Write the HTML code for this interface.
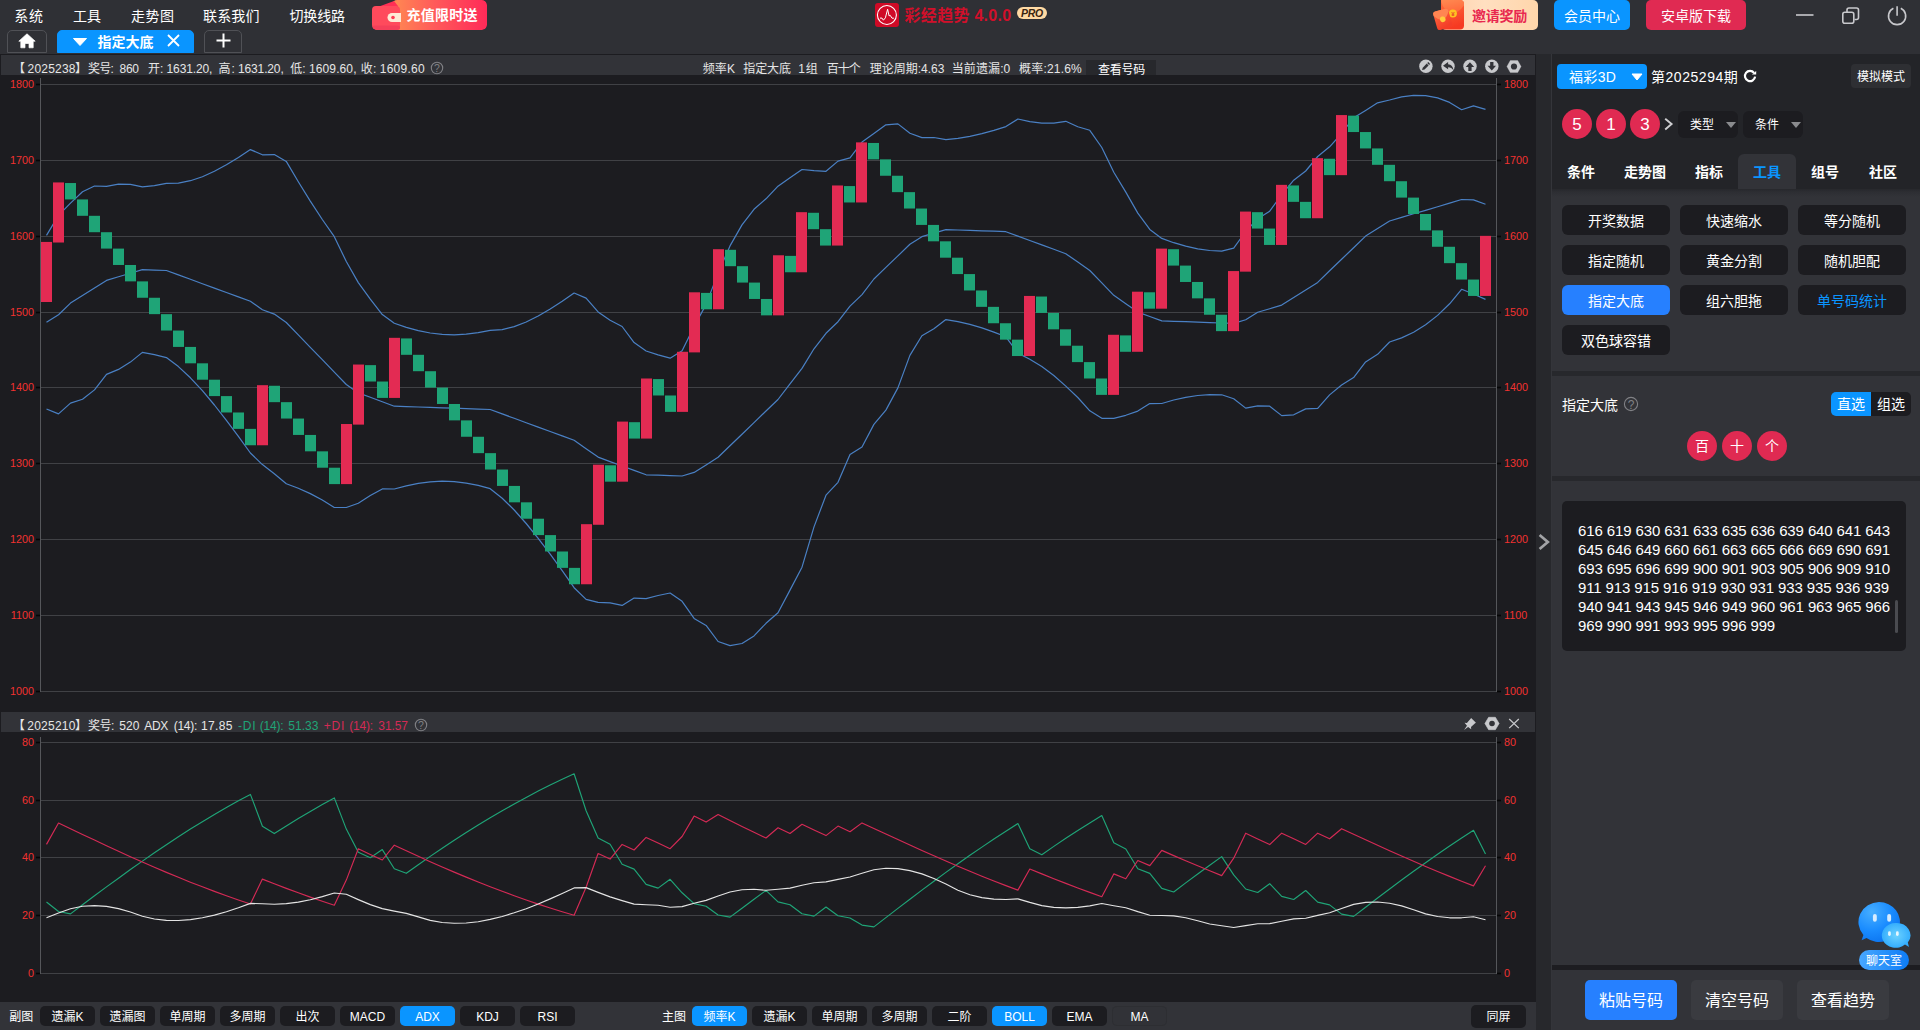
<!DOCTYPE html>
<html lang="zh-CN">
<head>
<meta charset="utf-8">
<title>彩经趋势 4.0.0</title>
<style>
*{box-sizing:border-box;margin:0;padding:0}
html,body{width:1920px;height:1030px;overflow:hidden;background:#1c1c20}
body{position:relative;font-family:"Liberation Sans","Noto Sans CJK SC",sans-serif;color:#fff;font-size:12px;line-height:1}
.abs{position:absolute}
.t{position:absolute;white-space:nowrap;line-height:1}
#topbar{position:absolute;left:0;top:0;width:1920px;height:54px;background:#2f3035}
.menu{position:absolute;top:8px;font-size:14px;line-height:16px;color:#fff;white-space:nowrap}
.tab{position:absolute;top:30px;height:23px;border:1px solid #505156;border-radius:5px 5px 0 0;background:#2f3035}
.hdr{position:absolute;background:#323338}
.hdr .t{top:0;height:20px;line-height:20px;font-size:12px;color:#e6e6e6}
.ax{position:absolute;font-size:10.8px;line-height:12px;color:#f23230;white-space:nowrap}
.axl{width:34px;text-align:right;left:0}
.axr{left:1504px}
.tb{position:absolute;top:1006px;height:20px;width:55px;border-radius:5px;background:#1c1c20;color:#fff;font-size:12px;line-height:22.6px;text-align:center;white-space:nowrap}
.tb.on{background:#0a95ff}
.lab{position:absolute;top:1006px;height:20px;line-height:20px;font-size:12px;color:#fff;white-space:nowrap}
#panel{position:absolute;left:1552px;top:54px;width:368px;height:976px;background:#323338}
.btn{position:absolute;width:108px;height:30px;border-radius:6px;background:#1c1c20;color:#fff;font-size:14px;line-height:32.4px;text-align:center;white-space:nowrap}
.ball{position:absolute;width:30px;height:30px;border-radius:50%;background:#e02a52;color:#fff;text-align:center;line-height:30px}
.ptab{position:absolute;top:100px;height:35px;line-height:36px;font-size:14px;font-weight:bold;color:#fff;text-align:center;white-space:nowrap}
.dd{position:absolute;top:57px;height:27px;width:60px;border-radius:6px;background:#1c1c20;font-size:12px;line-height:29px;color:#fff;padding-left:12px}
.bb{position:absolute;top:926px;height:40px;width:92px;border-radius:5px;background:#3a3b40;color:#fff;font-size:16px;line-height:42px;text-align:center;white-space:nowrap}
</style>
</head>
<body>
<div id="topbar">
  <div class="t" style="left:14.3px;top:6.0px;height:20px;line-height:20px;font-size:14px;color:#fff;letter-spacing:0.70px">系统</div><div class="t" style="left:73.0px;top:6.0px;height:20px;line-height:20px;font-size:14px;color:#fff">工具</div><div class="t" style="left:131.0px;top:6.0px;height:20px;line-height:20px;font-size:14px;color:#fff;letter-spacing:0.50px">走势图</div><div class="t" style="left:203.0px;top:6.0px;height:20px;line-height:20px;font-size:14px;color:#fff;letter-spacing:0.17px">联系我们</div><div class="t" style="left:289.5px;top:6.0px;height:20px;line-height:20px;font-size:14px;color:#fff;letter-spacing:-0.17px">切换线路</div>

  <!-- recharge promo -->
  <div class="abs" style="left:372px;top:0;width:115px;height:30px;border-radius:5px;overflow:hidden">
    <div class="abs" style="left:20px;top:0;width:95px;height:30px;border-radius:5px;background:linear-gradient(90deg,#ff8a52 0%,#ff5a5a 45%,#ff2a58 100%)"></div>
    <svg class="abs" style="left:0;top:0" width="32" height="30" viewBox="0 0 32 30">
      <path d="M3 8 L22 1 L26 6 L26 9 Z" fill="#ff2f55"/>
      <rect x="0" y="6" width="28" height="24" rx="4" fill="#ff4a5c"/>
      <rect x="0" y="25.5" width="28" height="4.5" rx="3" fill="#f5405a"/>
      <path d="M20 13 h9 v9 h-9 a4.5 4.5 0 0 1 0 -9z" fill="#ffe9d6"/>
      <circle cx="21" cy="17.5" r="1.8" fill="#ff3b55"/>
    </svg>
    <div class="t" style="left:34.5px;top:5.0px;height:20px;line-height:20px;font-size:14px;color:#fff;font-weight:bold;letter-spacing:0.25px">充值限时送</div>
  </div>

  <!-- tabs -->
  <div class="tab" style="left:7px;width:40px">
    <svg class="abs" style="left:10px;top:2px" width="18" height="16" viewBox="0 0 18 16"><path d="M9 0.8 L0.8 8.2 H2.8 V14.8 H7 V10.5 H11 V14.8 H15.2 V8.2 H17.2 Z" fill="#fff" stroke="#fff" stroke-width="0.7" stroke-linejoin="round"/></svg>
  </div>
  <div class="tab" style="left:57px;width:137px;background:#0a95ff;border-color:#0a95ff">
    <svg class="abs" style="left:15px;top:7px" width="14" height="8" viewBox="0 0 14 8"><path d="M0.5 0.5 H13.5 L7 7.5 Z" fill="#fff" stroke="#fff" stroke-linejoin="round" stroke-width="1"/></svg>
    <div class="t" style="left:39.5px;top:0.8px;height:20px;line-height:20px;font-size:14px;color:#fff;font-weight:bold">指定大底</div>
    <svg class="abs" style="left:109px;top:3px" width="13" height="13" viewBox="0 0 13 13"><path d="M1 1 L12 12 M12 1 L1 12" stroke="#fff" stroke-width="1.8" fill="none"/></svg>
  </div>
  <div class="tab" style="left:204px;width:38px">
    <svg class="abs" style="left:11px;top:2px" width="15" height="15" viewBox="0 0 15 15"><path d="M7.5 0.5 V14.5 M0.5 7.5 H14.5" stroke="#fff" stroke-width="2" fill="none"/></svg>
  </div>

  <!-- logo + title -->
  <svg class="abs" style="left:875px;top:3px" width="24" height="24" viewBox="0 0 24 24">
    <rect x="0" y="0" width="24" height="24" rx="3" fill="#cf0a26"/>
    <circle cx="11.9" cy="12" r="9.5" fill="none" stroke="#fff" stroke-width="1.1"/>
    <path d="M5 15.1 H7 L8.4 17.2 L10.4 14.8 L12.6 6.2 L14.1 12.9 L15.2 12.3 L17 15.2 H18.9" fill="none" stroke="#fff" stroke-width="1" stroke-linejoin="round"/>
  </svg>
  <div class="t" style="left:904.6px;top:5.5px;height:20px;line-height:20px;font-size:16px;color:#d10f2a;font-weight:bold;letter-spacing:0.27px">彩经趋势 4.0.0</div>
  <div class="abs" style="left:1017px;top:7px;width:30px;height:12px;border-radius:6px;background:#ffd9a3;color:#3a2410;font-size:10.5px;line-height:12px;font-weight:bold;font-style:italic;text-align:center;letter-spacing:-0.2px">PRO</div>

  <!-- invite -->
  <div class="abs" style="left:1441px;top:0;width:97px;height:30px;border-radius:5px;background:linear-gradient(90deg,#ffd2ae 0%,#ffdfc0 45%,#ffd6ab 100%)"></div>
  <svg class="abs" style="left:1430px;top:0" width="40" height="31" viewBox="1430 0 40 31">
    <defs>
      <linearGradient id="ev1" x1="0" y1="0" x2="0.3" y2="1"><stop offset="0" stop-color="#ff6f3e"/><stop offset="1" stop-color="#f63a22"/></linearGradient>
      <linearGradient id="ev2" x1="0" y1="0" x2="0.4" y2="1"><stop offset="0" stop-color="#ff8a52"/><stop offset="1" stop-color="#ff6a3c"/></linearGradient>
      <linearGradient id="ev3" x1="0" y1="0" x2="0.3" y2="1"><stop offset="0" stop-color="#ff6a40"/><stop offset="1" stop-color="#f43e28"/></linearGradient>
    </defs>
    <path d="M1441 0 H1460 a4 4 0 0 1 4 4 V25.5 a4 4 0 0 1 -4 4 H1445 a4 4 0 0 1 -4 -4 Z" fill="url(#ev1)"/>
    <path d="M1441.3 0 H1460 a4 4 0 0 1 4 4 V5.5 Q1458 13.5 1452.5 13.2 Q1444 12 1441.3 2 Z" fill="url(#ev2)"/>
    <circle cx="1452.9" cy="13.4" r="4" fill="#ffc321"/>
    <text x="1452.9" y="15.6" font-size="6" font-weight="bold" text-anchor="middle" fill="#e8452a" font-family="Liberation Sans,sans-serif">¥</text>
    <g transform="translate(0.7 -0.9) rotate(-16 1442 20)">
      <rect x="1434.2" y="10.6" width="15.6" height="19.2" rx="2.6" fill="url(#ev3)"/>
      <path d="M1434.2 13.2 a2.6 2.6 0 0 1 2.6 -2.6 H1447.2 a2.6 2.6 0 0 1 2.6 2.6 V14 Q1446 20.5 1442 20.3 Q1438 20.3 1434.2 14.5 Z" fill="#ff8552"/>
      <circle cx="1442" cy="20.2" r="2.8" fill="#ffcc3e"/>
    </g>
  </svg>
  <div class="t" style="left:1472.0px;top:6.0px;height:20px;line-height:20px;font-size:14px;color:#e8284f;font-weight:bold;letter-spacing:-0.23px">邀请奖励</div>
  <div class="abs" style="left:1554px;top:0;width:76px;height:30px;border-radius:5px;background:#0a95ff;color:#fff;font-size:14px;line-height:32px;text-align:center">会员中心</div>
  <div class="abs" style="left:1646px;top:0;width:100px;height:30px;border-radius:5px;background:#e02a52;color:#fff;font-size:14px;line-height:32px;text-align:center">安卓版下载</div>

  <!-- window controls -->
  <svg class="abs" style="left:1790px;top:0" width="130" height="32" viewBox="0 0 130 32" fill="none" stroke="#c8c8cc" stroke-width="1.6">
    <path d="M6 15 H23.5"/>
    <rect x="52.8" y="12.3" width="11" height="11" rx="2"/>
    <path d="M57 12 V10 a2 2 0 0 1 2 -2 H66.5 a2 2 0 0 1 2 2 V17.5 a2 2 0 0 1 -2 2 H64.5"/>
    <path d="M107.1 6.2 V15.7"/>
    <path d="M103.4 8.3 A8.6 8.6 0 1 0 110.8 8.3"/>
  </svg>
</div>

<!-- main chart header -->
<div class="hdr" style="left:1px;top:55px;width:1534px;height:20px">
  <div class="t" style="left:12.0px;top:3.5px;height:20px;line-height:20px;font-size:12px;color:#e6e6e6">【</div><div class="t" style="left:26.5px;top:3.5px;height:20px;line-height:20px;font-size:12px;color:#e6e6e6;letter-spacing:0.22px">2025238</div><div class="t" style="left:74.0px;top:3.5px;height:20px;line-height:20px;font-size:12px;color:#e6e6e6">】</div><div class="t" style="left:87.0px;top:3.5px;height:20px;line-height:20px;font-size:12px;color:#e6e6e6;letter-spacing:-0.75px">奖号:</div><div class="t" style="left:118.5px;top:3.5px;height:20px;line-height:20px;font-size:12px;color:#e6e6e6;letter-spacing:-0.25px">860</div><div class="t" style="left:147.0px;top:3.5px;height:20px;line-height:20px;font-size:12px;color:#e6e6e6">开:</div><div class="t" style="left:165.5px;top:3.5px;height:20px;line-height:20px;font-size:12px;color:#e6e6e6;letter-spacing:-0.11px">1631.20,</div><div class="t" style="left:217.5px;top:3.5px;height:20px;line-height:20px;font-size:12px;color:#e6e6e6;letter-spacing:1.00px">高:</div><div class="t" style="left:237.0px;top:3.5px;height:20px;line-height:20px;font-size:12px;color:#e6e6e6;letter-spacing:-0.14px">1631.20,</div><div class="t" style="left:289.3px;top:3.5px;height:20px;line-height:20px;font-size:12px;color:#e6e6e6">低:</div><div class="t" style="left:308.0px;top:3.5px;height:20px;line-height:20px;font-size:12px;color:#e6e6e6;letter-spacing:0.11px">1609.60,</div><div class="t" style="left:359.7px;top:3.5px;height:20px;line-height:20px;font-size:12px;color:#e6e6e6;letter-spacing:0.30px">收:</div><div class="t" style="left:378.8px;top:3.5px;height:20px;line-height:20px;font-size:12px;color:#e6e6e6;letter-spacing:0.23px">1609.60</div>
  <svg class="abs" style="left:429px;top:6px" width="14" height="14" viewBox="0 0 14 14"><circle cx="7" cy="7" r="5.7" fill="none" stroke="#808185" stroke-width="1.1"/><text x="7" y="10.9" font-size="10.5" text-anchor="middle" fill="#808185" font-family="Liberation Sans,sans-serif">?</text></svg>
  <div class="t" style="left:701.7px;top:3.5px;height:20px;line-height:20px;font-size:12px;color:#e6e6e6;letter-spacing:0.15px">频率K</div><div class="t" style="left:742.3px;top:3.5px;height:20px;line-height:20px;font-size:12px;color:#e6e6e6;letter-spacing:-0.10px">指定大底</div><div class="t" style="left:797.3px;top:3.5px;height:20px;line-height:20px;font-size:12px;color:#e6e6e6;letter-spacing:0.70px">1组</div><div class="t" style="left:825.7px;top:3.5px;height:20px;line-height:20px;font-size:12px;color:#e6e6e6;letter-spacing:-1.00px">百十个</div><div class="t" style="left:868.7px;top:3.5px;height:20px;line-height:20px;font-size:12px;color:#e6e6e6">理论周期:4.63</div><div class="t" style="left:950.7px;top:3.5px;height:20px;line-height:20px;font-size:12px;color:#e6e6e6;letter-spacing:0.12px">当前遗漏:0</div><div class="t" style="left:1018.0px;top:3.5px;height:20px;line-height:20px;font-size:12px;color:#e6e6e6;letter-spacing:0.19px">概率:21.6%</div>
  <div class="abs" style="left:1085px;top:5px;width:70px;height:15px;background:#27282c"></div>
  <div class="t" style="left:1097.0px;top:4.5px;height:20px;line-height:20px;font-size:12px;color:#fff;letter-spacing:-0.23px">查看号码</div>
  <svg class="abs" style="left:1416px;top:3px" width="112" height="18" viewBox="1417 58 112 18">
    <g fill="#c8c9cc">
      <circle cx="1425.9" cy="66.3" r="6.7"/><circle cx="1448" cy="66.3" r="6.7"/><circle cx="1470" cy="66.3" r="6.7"/><circle cx="1491.8" cy="66.3" r="6.7"/>
      <path d="M1506.9 66.5 L1510.3 60.5 H1517.7 L1521.1 66.5 L1517.7 72.5 H1510.3 Z" stroke="#c8c9cc" stroke-width="0.3" stroke-linejoin="round"/>
    </g>
    <g fill="#323338">
      <g transform="translate(1425.9 66.3) rotate(-45)"><path d="M-5.4 0 L-3.2 -1.3 H2.5 V1.3 H-3.2 Z"/><rect x="3.2" y="-1.3" width="1.5" height="2.6"/></g>
      <path d="M1443 65.7 L1448.1 62 V64.2 Q1453 64.6 1453.5 70.4 Q1451.5 67.2 1448.1 67.2 V69.3 Z"/>
      <path d="M1469.95 62.3 L1474.2 67.1 H1471.6 V71 H1468.3 V67.1 H1465.7 Z"/>
      <path d="M1491.8 70.6 L1496.05 65.8 H1493.45 V62.1 H1490.15 V65.8 H1487.55 Z"/>
      <circle cx="1514" cy="66.5" r="3.1"/>
    </g>
  </svg>
</div>

<!-- main chart -->
<svg class="abs" style="left:0;top:75px" width="1536" height="637" viewBox="0 75 1536 637">
  <g stroke="#404145" stroke-width="1" shape-rendering="crispEdges">
    <line x1="41" y1="84.5" x2="1496" y2="84.5"/>
    <line x1="41" y1="160.5" x2="1496" y2="160.5"/>
    <line x1="41" y1="236.5" x2="1496" y2="236.5"/>
    <line x1="41" y1="312.5" x2="1496" y2="312.5"/>
    <line x1="41" y1="387.5" x2="1496" y2="387.5"/>
    <line x1="41" y1="463.5" x2="1496" y2="463.5"/>
    <line x1="41" y1="539.5" x2="1496" y2="539.5"/>
    <line x1="41" y1="615.5" x2="1496" y2="615.5"/>
    <line x1="41" y1="691.5" x2="1496" y2="691.5"/>
  </g>
  <g stroke="#55565a" stroke-width="1" shape-rendering="crispEdges">
    <line x1="40.5" y1="78" x2="40.5" y2="691.5"/><line x1="1496.5" y1="78" x2="1496.5" y2="691.5"/>
  </g>
  <g fill="#050506"><rect x="36" y="83.7" width="4" height="1.6"/><rect x="1497" y="83.7" width="4" height="1.6"/><rect x="36" y="159.7" width="4" height="1.6"/><rect x="1497" y="159.7" width="4" height="1.6"/><rect x="36" y="235.7" width="4" height="1.6"/><rect x="1497" y="235.7" width="4" height="1.6"/><rect x="36" y="311.7" width="4" height="1.6"/><rect x="1497" y="311.7" width="4" height="1.6"/><rect x="36" y="386.7" width="4" height="1.6"/><rect x="1497" y="386.7" width="4" height="1.6"/><rect x="36" y="462.7" width="4" height="1.6"/><rect x="1497" y="462.7" width="4" height="1.6"/><rect x="36" y="538.7" width="4" height="1.6"/><rect x="1497" y="538.7" width="4" height="1.6"/><rect x="36" y="614.7" width="4" height="1.6"/><rect x="1497" y="614.7" width="4" height="1.6"/><rect x="36" y="690.7" width="4" height="1.6"/><rect x="1497" y="690.7" width="4" height="1.6"/></g>
<polyline points="46.5,235.4 58.5,215.4 70.5,203.1 82.5,191.7 94.5,186.0 106.5,186.3 118.5,184.2 130.4,184.3 142.4,186.9 154.4,185.6 166.4,183.4 178.4,183.1 190.4,180.7 202.4,176.7 214.4,171.2 226.4,164.8 238.4,157.5 250.4,149.6 262.4,154.8 274.3,154.6 286.3,161.4 298.3,181.7 310.3,201.1 322.3,219.5 334.3,236.7 346.3,261.5 358.3,282.6 370.3,299.1 382.3,314.6 394.3,323.3 406.3,327.4 418.3,330.6 430.2,333.0 442.2,334.4 454.2,334.8 466.2,334.2 478.2,332.7 490.2,330.3 502.2,329.6 514.2,326.6 526.2,322.0 538.2,316.0 550.2,309.0 562.2,301.3 574.1,293.0 586.1,298.1 598.1,311.9 610.1,320.3 622.1,326.5 634.1,342.6 646.1,351.0 658.1,354.9 670.1,358.2 682.1,350.7 694.1,326.5 706.1,304.4 718.1,273.1 730.0,245.9 742.0,224.9 754.0,209.3 766.0,198.8 778.0,186.2 790.0,177.8 802.0,169.5 814.0,170.7 826.0,171.3 838.0,161.1 850.0,157.9 862.0,142.1 873.9,133.6 885.9,124.8 897.9,123.9 909.9,133.2 921.9,137.6 933.9,137.5 945.9,139.6 957.9,138.4 969.9,136.4 981.9,133.7 993.9,130.4 1005.9,126.6 1017.9,119.0 1029.8,121.7 1041.8,123.2 1053.8,123.1 1065.8,121.3 1077.8,126.7 1089.8,130.3 1101.8,147.5 1113.8,172.3 1125.8,192.1 1137.8,213.1 1149.8,229.4 1161.8,238.4 1173.7,242.7 1185.7,246.2 1197.7,248.8 1209.7,250.5 1221.7,251.2 1233.7,248.1 1245.7,231.5 1257.7,218.7 1269.7,211.2 1281.7,194.6 1293.7,180.2 1305.7,171.0 1317.7,156.5 1329.6,146.8 1341.6,133.5 1353.6,117.7 1365.6,110.4 1377.6,102.8 1389.6,100.0 1401.6,96.9 1413.6,95.4 1425.6,95.7 1437.6,97.9 1449.6,102.4 1461.6,109.7 1473.5,105.9 1485.5,109.3" fill="none" stroke="#4a80c4" stroke-width="1.2" stroke-linejoin="round"/>
<polyline points="46.5,322.2 58.5,314.7 70.5,303.1 82.5,295.5 94.5,287.9 106.5,280.4 118.5,276.8 130.4,273.2 142.4,269.6 154.4,270.1 166.4,270.5 178.4,274.9 190.4,279.3 202.4,283.7 214.4,288.1 226.4,292.5 238.4,296.9 250.4,301.3 262.4,309.7 274.3,314.1 286.3,322.5 298.3,334.9 310.3,347.3 322.3,359.7 334.3,372.1 346.3,384.5 358.3,392.9 370.3,397.3 382.3,401.7 394.3,406.2 406.3,406.6 418.3,407.0 430.2,407.4 442.2,407.8 454.2,408.2 466.2,408.6 478.2,409.1 490.2,409.5 502.2,413.9 514.2,418.3 526.2,422.7 538.2,427.1 550.2,431.5 562.2,435.9 574.1,440.3 586.1,448.7 598.1,457.1 610.1,461.6 622.1,466.0 634.1,470.4 646.1,474.8 658.1,475.2 670.1,475.6 682.1,476.0 694.1,472.4 706.1,464.9 718.1,457.3 730.0,445.7 742.0,434.2 754.0,422.6 766.0,411.0 778.0,399.5 790.0,383.9 802.0,368.4 814.0,348.8 826.0,333.3 838.0,321.7 850.0,306.1 862.0,294.6 873.9,279.0 885.9,267.4 897.9,255.9 909.9,244.3 921.9,236.7 933.9,233.2 945.9,229.6 957.9,230.0 969.9,230.4 981.9,230.8 993.9,231.2 1005.9,231.7 1017.9,236.1 1029.8,240.5 1041.8,244.9 1053.8,249.3 1065.8,253.7 1077.8,262.1 1089.8,270.5 1101.8,282.9 1113.8,295.3 1125.8,303.7 1137.8,312.1 1149.8,316.5 1161.8,320.9 1173.7,321.3 1185.7,321.7 1197.7,322.2 1209.7,322.6 1221.7,323.0 1233.7,323.4 1245.7,319.8 1257.7,312.3 1269.7,308.7 1281.7,305.1 1293.7,297.5 1305.7,290.0 1317.7,282.4 1329.6,270.8 1341.6,259.3 1353.6,247.7 1365.6,236.1 1377.6,228.6 1389.6,221.0 1401.6,217.4 1413.6,213.8 1425.6,210.3 1437.6,206.7 1449.6,203.1 1461.6,199.5 1473.5,199.9 1485.5,204.3" fill="none" stroke="#4a80c4" stroke-width="1.2" stroke-linejoin="round"/>
<polyline points="46.5,409.0 58.5,413.9 70.5,403.1 82.5,399.3 94.5,389.9 106.5,374.4 118.5,369.4 130.4,362.1 142.4,352.4 154.4,354.6 166.4,357.6 178.4,366.6 190.4,377.8 202.4,390.7 214.4,405.0 226.4,420.3 238.4,436.3 250.4,453.0 262.4,464.6 274.3,473.7 286.3,483.7 298.3,488.2 310.3,493.6 322.3,500.0 334.3,507.5 346.3,507.5 358.3,503.2 370.3,495.6 382.3,488.9 394.3,489.0 406.3,485.8 418.3,483.4 430.2,481.8 442.2,481.2 454.2,481.7 466.2,483.1 478.2,485.4 490.2,488.7 502.2,498.2 514.2,510.0 526.2,523.5 538.2,538.3 550.2,554.1 562.2,570.6 574.1,587.7 586.1,599.4 598.1,602.4 610.1,602.8 622.1,605.4 634.1,598.1 646.1,598.6 658.1,595.5 670.1,593.0 682.1,601.3 694.1,618.4 706.1,625.4 718.1,641.5 730.0,645.6 742.0,643.5 754.0,635.9 766.0,623.3 778.0,612.7 790.0,590.1 802.0,567.2 814.0,526.9 826.0,495.2 838.0,482.3 850.0,454.4 862.0,447.0 873.9,424.4 885.9,410.1 897.9,387.9 909.9,355.4 921.9,335.8 933.9,328.8 945.9,319.6 957.9,321.6 969.9,324.4 981.9,327.9 993.9,332.1 1005.9,336.8 1017.9,353.1 1029.8,359.3 1041.8,366.5 1053.8,375.5 1065.8,386.1 1077.8,397.5 1089.8,410.8 1101.8,418.3 1113.8,418.3 1125.8,415.3 1137.8,411.1 1149.8,403.6 1161.8,403.5 1173.7,400.0 1185.7,397.3 1197.7,395.5 1209.7,394.7 1221.7,394.8 1233.7,398.7 1245.7,408.1 1257.7,405.9 1269.7,406.2 1281.7,415.6 1293.7,414.8 1305.7,408.9 1317.7,408.3 1329.6,394.9 1341.6,385.0 1353.6,377.6 1365.6,361.9 1377.6,354.3 1389.6,342.0 1401.6,337.9 1413.6,332.2 1425.6,324.8 1437.6,315.4 1449.6,303.8 1461.6,289.3 1473.5,294.0 1485.5,299.4" fill="none" stroke="#4a80c4" stroke-width="1.2" stroke-linejoin="round"/>
<g fill="#e32b53"><rect x="41" y="241.92" width="11" height="60.09"/><rect x="53" y="182.43" width="11" height="60.09"/><rect x="257" y="385.17" width="11" height="60.09"/><rect x="341" y="424.02" width="11" height="60.09"/><rect x="353" y="364.53" width="11" height="60.09"/><rect x="389" y="337.83" width="11" height="60.09"/><rect x="581" y="524.17" width="11" height="60.09"/><rect x="593" y="464.69" width="11" height="60.09"/><rect x="617" y="421.59" width="11" height="60.09"/><rect x="641" y="378.49" width="11" height="60.09"/><rect x="677" y="351.79" width="11" height="60.09"/><rect x="689" y="292.30" width="11" height="60.09"/><rect x="713" y="249.20" width="11" height="60.09"/><rect x="773" y="255.27" width="11" height="60.09"/><rect x="796" y="212.18" width="11" height="60.09"/><rect x="832" y="185.47" width="11" height="60.09"/><rect x="856" y="142.37" width="11" height="60.09"/><rect x="1024" y="295.94" width="11" height="60.09"/><rect x="1108" y="334.79" width="11" height="60.09"/><rect x="1132" y="291.69" width="11" height="60.09"/><rect x="1156" y="248.60" width="11" height="60.09"/><rect x="1228" y="271.06" width="11" height="60.09"/><rect x="1240" y="211.57" width="11" height="60.09"/><rect x="1276" y="184.86" width="11" height="60.09"/><rect x="1312" y="158.15" width="11" height="60.09"/><rect x="1336" y="115.06" width="11" height="60.09"/><rect x="1480" y="235.85" width="11" height="60.09"/></g>
<g fill="#1fa477"><rect x="65" y="183.03" width="11" height="16.39"/><rect x="77" y="199.42" width="11" height="16.39"/><rect x="89" y="215.81" width="11" height="16.39"/><rect x="101" y="232.20" width="11" height="16.39"/><rect x="113" y="248.59" width="11" height="16.39"/><rect x="125" y="264.98" width="11" height="16.39"/><rect x="137" y="281.37" width="11" height="16.39"/><rect x="149" y="297.76" width="11" height="16.39"/><rect x="161" y="314.15" width="11" height="16.39"/><rect x="173" y="330.53" width="11" height="16.39"/><rect x="185" y="346.92" width="11" height="16.39"/><rect x="197" y="363.31" width="11" height="16.39"/><rect x="209" y="379.70" width="11" height="16.39"/><rect x="221" y="396.09" width="11" height="16.39"/><rect x="233" y="412.48" width="11" height="16.39"/><rect x="245" y="428.87" width="11" height="16.39"/><rect x="269" y="385.77" width="11" height="16.39"/><rect x="281" y="402.16" width="11" height="16.39"/><rect x="293" y="418.55" width="11" height="16.39"/><rect x="305" y="434.94" width="11" height="16.39"/><rect x="317" y="451.33" width="11" height="16.39"/><rect x="329" y="467.72" width="11" height="16.39"/><rect x="365" y="365.13" width="11" height="16.39"/><rect x="377" y="381.52" width="11" height="16.39"/><rect x="401" y="338.43" width="11" height="16.39"/><rect x="413" y="354.81" width="11" height="16.39"/><rect x="425" y="371.20" width="11" height="16.39"/><rect x="437" y="387.59" width="11" height="16.39"/><rect x="449" y="403.98" width="11" height="16.39"/><rect x="461" y="420.37" width="11" height="16.39"/><rect x="473" y="436.76" width="11" height="16.39"/><rect x="485" y="453.15" width="11" height="16.39"/><rect x="497" y="469.54" width="11" height="16.39"/><rect x="509" y="485.93" width="11" height="16.39"/><rect x="521" y="502.32" width="11" height="16.39"/><rect x="533" y="518.70" width="11" height="16.39"/><rect x="545" y="535.09" width="11" height="16.39"/><rect x="557" y="551.48" width="11" height="16.39"/><rect x="569" y="567.87" width="11" height="16.39"/><rect x="605" y="465.29" width="11" height="16.39"/><rect x="629" y="422.19" width="11" height="16.39"/><rect x="653" y="379.09" width="11" height="16.39"/><rect x="665" y="395.48" width="11" height="16.39"/><rect x="701" y="292.90" width="11" height="16.39"/><rect x="725" y="249.80" width="11" height="16.39"/><rect x="737" y="266.19" width="11" height="16.39"/><rect x="749" y="282.58" width="11" height="16.39"/><rect x="761" y="298.97" width="11" height="16.39"/><rect x="785" y="255.87" width="11" height="16.39"/><rect x="808" y="212.78" width="11" height="16.39"/><rect x="820" y="229.17" width="11" height="16.39"/><rect x="844" y="186.07" width="11" height="16.39"/><rect x="868" y="142.97" width="11" height="16.39"/><rect x="880" y="159.36" width="11" height="16.39"/><rect x="892" y="175.75" width="11" height="16.39"/><rect x="904" y="192.14" width="11" height="16.39"/><rect x="916" y="208.53" width="11" height="16.39"/><rect x="928" y="224.92" width="11" height="16.39"/><rect x="940" y="241.31" width="11" height="16.39"/><rect x="952" y="257.69" width="11" height="16.39"/><rect x="964" y="274.08" width="11" height="16.39"/><rect x="976" y="290.47" width="11" height="16.39"/><rect x="988" y="306.86" width="11" height="16.39"/><rect x="1000" y="323.25" width="11" height="16.39"/><rect x="1012" y="339.64" width="11" height="16.39"/><rect x="1036" y="296.54" width="11" height="16.39"/><rect x="1048" y="312.93" width="11" height="16.39"/><rect x="1060" y="329.32" width="11" height="16.39"/><rect x="1072" y="345.71" width="11" height="16.39"/><rect x="1084" y="362.10" width="11" height="16.39"/><rect x="1096" y="378.49" width="11" height="16.39"/><rect x="1120" y="335.39" width="11" height="16.39"/><rect x="1144" y="292.29" width="11" height="16.39"/><rect x="1168" y="249.20" width="11" height="16.39"/><rect x="1180" y="265.59" width="11" height="16.39"/><rect x="1192" y="281.97" width="11" height="16.39"/><rect x="1204" y="298.36" width="11" height="16.39"/><rect x="1216" y="314.75" width="11" height="16.39"/><rect x="1252" y="212.17" width="11" height="16.39"/><rect x="1264" y="228.56" width="11" height="16.39"/><rect x="1288" y="185.46" width="11" height="16.39"/><rect x="1300" y="201.85" width="11" height="16.39"/><rect x="1324" y="158.75" width="11" height="16.39"/><rect x="1348" y="115.66" width="11" height="16.39"/><rect x="1360" y="132.05" width="11" height="16.39"/><rect x="1372" y="148.43" width="11" height="16.39"/><rect x="1384" y="164.82" width="11" height="16.39"/><rect x="1396" y="181.21" width="11" height="16.39"/><rect x="1408" y="197.60" width="11" height="16.39"/><rect x="1420" y="213.99" width="11" height="16.39"/><rect x="1432" y="230.38" width="11" height="16.39"/><rect x="1444" y="246.77" width="11" height="16.39"/><rect x="1456" y="263.16" width="11" height="16.39"/><rect x="1468" y="279.55" width="11" height="16.39"/></g>
</svg>
<div class="ax axl" style="top:78px">1800</div><div class="ax axr" style="top:78px">1800</div>
<div class="ax axl" style="top:154px">1700</div><div class="ax axr" style="top:154px">1700</div>
<div class="ax axl" style="top:230px">1600</div><div class="ax axr" style="top:230px">1600</div>
<div class="ax axl" style="top:306px">1500</div><div class="ax axr" style="top:306px">1500</div>
<div class="ax axl" style="top:381px">1400</div><div class="ax axr" style="top:381px">1400</div>
<div class="ax axl" style="top:457px">1300</div><div class="ax axr" style="top:457px">1300</div>
<div class="ax axl" style="top:533px">1200</div><div class="ax axr" style="top:533px">1200</div>
<div class="ax axl" style="top:609px">1100</div><div class="ax axr" style="top:609px">1100</div>
<div class="ax axl" style="top:685px">1000</div><div class="ax axr" style="top:685px">1000</div>

<!-- sub chart header -->
<div class="hdr" style="left:1px;top:712px;width:1534px;height:20px">
  <div class="t" style="left:11.7px;top:3.5px;height:20px;line-height:20px;font-size:12px;color:#e6e6e6">【</div><div class="t" style="left:26.3px;top:3.5px;height:20px;line-height:20px;font-size:12px;color:#e6e6e6;letter-spacing:0.23px">2025210</div><div class="t" style="left:74.0px;top:3.5px;height:20px;line-height:20px;font-size:12px;color:#e6e6e6">】</div><div class="t" style="left:87.0px;top:3.5px;height:20px;line-height:20px;font-size:12px;color:#e6e6e6;letter-spacing:-0.50px">奖号:</div><div class="t" style="left:118.3px;top:3.5px;height:20px;line-height:20px;font-size:12px;color:#e6e6e6">520</div><div class="t" style="left:143.3px;top:3.5px;height:20px;line-height:20px;font-size:12px;color:#e6e6e6;letter-spacing:-0.30px">ADX</div><div class="t" style="left:172.7px;top:3.5px;height:20px;line-height:20px;font-size:12px;color:#e6e6e6;letter-spacing:-0.25px">(14):</div><div class="t" style="left:200.0px;top:3.5px;height:20px;line-height:20px;font-size:12px;color:#e6e6e6;letter-spacing:0.33px">17.85</div><div class="t" style="left:237.0px;top:3.5px;height:20px;line-height:20px;font-size:12px;color:#1fa477;letter-spacing:0.85px">-DI</div><div class="t" style="left:258.7px;top:3.5px;height:20px;line-height:20px;font-size:12px;color:#1fa477;letter-spacing:-0.17px">(14):</div><div class="t" style="left:287.3px;top:3.5px;height:20px;line-height:20px;font-size:12px;color:#1fa477">51.33</div><div class="t" style="left:322.7px;top:3.5px;height:20px;line-height:20px;font-size:12px;color:#d42a55;letter-spacing:0.80px">+DI</div><div class="t" style="left:348.3px;top:3.5px;height:20px;line-height:20px;font-size:12px;color:#d42a55;letter-spacing:-0.25px">(14):</div><div class="t" style="left:377.3px;top:3.5px;height:20px;line-height:20px;font-size:12px;color:#d42a55;letter-spacing:-0.07px">31.57</div>
  <svg class="abs" style="left:413px;top:6px" width="14" height="14" viewBox="0 0 14 14"><circle cx="7" cy="7" r="5.7" fill="none" stroke="#808185" stroke-width="1.1"/><text x="7" y="10.9" font-size="10.5" text-anchor="middle" fill="#808185" font-family="Liberation Sans,sans-serif">?</text></svg>
  <svg class="abs" style="left:1459px;top:3px" width="64" height="18" viewBox="1460 715 64 18">
    <g transform="translate(1464 729.9) rotate(-45)" fill="#c8c9cc"><path d="M0 0 L5 -0.8 L5.5 -4.7 L7 -2.9 L12.5 -3.2 L13.5 -3.4 L13.5 3.4 L12.5 3.2 L7 2.9 L5.5 4.7 L5 0.8 Z"/></g>
    <path d="M1484.9 723.5 L1488.6 717.3 H1495.4 L1499.1 723.5 L1495.4 729.7 H1488.6 Z" fill="#c8c9cc" stroke="#c8c9cc" stroke-width="0.6" stroke-linejoin="round"/>
    <circle cx="1492" cy="723.5" r="2.8" fill="#323338"/>
    <path d="M1509.2 719 L1518.8 728.1 M1518.8 719 L1509.2 728.1" stroke="#c8c9cc" stroke-width="1.3" fill="none"/>
  </svg>
</div>

<!-- sub chart -->
<svg class="abs" style="left:0;top:732px" width="1536" height="270" viewBox="0 732 1536 270">
  <g stroke="#404145" stroke-width="1" shape-rendering="crispEdges">
    <line x1="41" y1="742.5" x2="1496" y2="742.5"/>
    <line x1="41" y1="800.5" x2="1496" y2="800.5"/>
    <line x1="41" y1="857.5" x2="1496" y2="857.5"/>
    <line x1="41" y1="915.5" x2="1496" y2="915.5"/>
    <line x1="41" y1="973.5" x2="1496" y2="973.5"/>
  </g>
  <g stroke="#55565a" stroke-width="1" shape-rendering="crispEdges">
    <line x1="40.5" y1="737" x2="40.5" y2="973.5"/><line x1="1496.5" y1="737" x2="1496.5" y2="973.5"/>
  </g>
  <g fill="#050506"><rect x="36" y="741.7" width="4" height="1.6"/><rect x="1497" y="741.7" width="4" height="1.6"/><rect x="36" y="799.7" width="4" height="1.6"/><rect x="1497" y="799.7" width="4" height="1.6"/><rect x="36" y="856.7" width="4" height="1.6"/><rect x="1497" y="856.7" width="4" height="1.6"/><rect x="36" y="914.7" width="4" height="1.6"/><rect x="1497" y="914.7" width="4" height="1.6"/><rect x="36" y="972.7" width="4" height="1.6"/><rect x="1497" y="972.7" width="4" height="1.6"/></g>
<polyline points="46.5,902.0 58.5,911.5 70.5,913.9 82.5,904.8 94.5,895.8 106.5,886.9 118.5,878.2 130.4,869.5 142.4,861.1 154.4,852.8 166.4,844.7 178.4,836.8 190.4,829.1 202.4,821.7 214.4,814.5 226.4,807.5 238.4,800.8 250.4,794.4 262.4,826.2 274.3,833.6 286.3,826.0 298.3,818.6 310.3,811.4 322.3,804.5 334.3,797.9 346.3,829.1 358.3,852.2 370.3,857.7 382.3,849.6 394.3,868.7 406.3,873.3 418.3,864.8 430.2,856.4 442.2,848.3 454.2,840.3 466.2,832.6 478.2,825.1 490.2,817.8 502.2,810.8 514.2,804.0 526.2,797.4 538.2,791.1 550.2,785.1 562.2,779.3 574.1,773.8 586.1,810.8 598.1,837.9 610.1,844.2 622.1,864.3 634.1,869.1 646.1,884.4 658.1,888.1 670.1,879.3 682.1,892.8 694.1,903.6 706.1,906.3 718.1,915.0 730.0,917.1 742.0,908.2 754.0,899.3 766.0,890.4 778.0,901.9 790.0,904.7 802.0,913.8 814.0,916.1 826.0,907.0 838.0,915.8 850.0,918.0 862.0,925.1 873.9,926.9 885.9,917.6 897.9,908.4 909.9,899.2 921.9,890.1 933.9,881.2 945.9,872.4 957.9,863.8 969.9,855.3 981.9,847.1 993.9,839.0 1005.9,831.2 1017.9,823.6 1029.8,848.8 1041.8,854.7 1053.8,846.4 1065.8,838.3 1077.8,830.5 1089.8,823.0 1101.8,815.6 1113.8,842.7 1125.8,849.0 1137.8,868.7 1149.8,873.4 1161.8,888.4 1173.7,892.0 1185.7,882.9 1197.7,874.0 1209.7,865.2 1221.7,856.6 1233.7,874.9 1245.7,889.0 1257.7,892.5 1269.7,883.7 1281.7,896.4 1293.7,899.5 1305.7,890.5 1317.7,902.1 1329.6,904.9 1341.6,914.1 1353.6,916.4 1365.6,907.2 1377.6,898.0 1389.6,889.0 1401.6,880.0 1413.6,871.3 1425.6,862.7 1437.6,854.3 1449.6,846.0 1461.6,838.0 1473.5,830.3 1485.5,853.9" fill="none" stroke="#1fa477" stroke-width="1.15" stroke-linejoin="round"/>
<polyline points="46.5,844.4 58.5,823.0 70.5,828.8 82.5,834.5 94.5,840.1 106.5,845.7 118.5,851.2 130.4,856.7 142.4,862.0 154.4,867.2 166.4,872.4 178.4,877.3 190.4,882.2 202.4,886.8 214.4,891.4 226.4,895.8 238.4,900.0 250.4,904.0 262.4,879.1 274.3,883.8 286.3,888.4 298.3,892.8 310.3,897.1 322.3,901.2 334.3,905.2 346.3,880.1 358.3,848.8 370.3,854.4 382.3,860.0 394.3,845.2 406.3,850.8 418.3,856.3 430.2,861.7 442.2,867.0 454.2,872.1 466.2,877.1 478.2,882.0 490.2,886.8 502.2,891.3 514.2,895.7 526.2,900.0 538.2,904.1 550.2,908.0 562.2,911.7 574.1,915.3 586.1,887.2 598.1,853.5 610.1,859.1 622.1,844.4 634.1,850.0 646.1,837.4 658.1,843.1 670.1,848.7 682.1,836.5 694.1,816.1 706.1,822.1 718.1,814.6 730.0,820.5 742.0,826.4 754.0,832.2 766.0,838.0 778.0,827.8 790.0,833.5 802.0,824.3 814.0,829.9 826.0,835.6 838.0,826.1 850.0,831.7 862.0,822.9 873.9,828.5 885.9,834.0 897.9,839.5 909.9,845.0 921.9,850.4 933.9,855.8 945.9,861.0 957.9,866.2 969.9,871.2 981.9,876.2 993.9,881.0 1005.9,885.6 1017.9,890.1 1029.8,869.0 1041.8,873.9 1053.8,878.7 1065.8,883.4 1077.8,888.0 1089.8,892.4 1101.8,896.7 1113.8,873.9 1125.8,878.8 1137.8,860.5 1149.8,865.6 1161.8,850.4 1173.7,855.6 1185.7,860.8 1197.7,865.8 1209.7,870.8 1221.7,875.6 1233.7,858.2 1245.7,833.2 1257.7,838.9 1269.7,844.6 1281.7,833.2 1293.7,838.8 1305.7,844.4 1317.7,833.2 1329.6,838.8 1341.6,828.7 1353.6,834.3 1365.6,839.8 1377.6,845.3 1389.6,850.7 1401.6,856.0 1413.6,861.3 1425.6,866.5 1437.6,871.5 1449.6,876.4 1461.6,881.2 1473.5,885.9 1485.5,865.7" fill="none" stroke="#d42a55" stroke-width="1.15" stroke-linejoin="round"/>
<polyline points="46.5,917.7 58.5,913.0 70.5,908.7 82.5,906.3 94.5,905.6 106.5,906.4 118.5,908.6 130.4,912.0 142.4,916.3 154.4,919.0 166.4,920.4 178.4,920.5 190.4,919.6 202.4,917.8 214.4,915.1 226.4,911.8 238.4,907.8 250.4,903.4 262.4,903.8 274.3,904.2 286.3,903.6 298.3,902.1 310.3,899.7 322.3,896.6 334.3,893.0 346.3,894.3 358.3,899.6 370.3,904.6 382.3,908.6 394.3,911.1 406.3,913.4 418.3,916.9 430.2,920.4 442.2,922.5 454.2,923.3 466.2,923.0 478.2,921.7 490.2,919.4 502.2,916.5 514.2,912.8 526.2,908.7 538.2,904.0 550.2,898.9 562.2,893.5 574.1,887.9 586.1,887.6 598.1,892.4 610.1,896.9 622.1,900.6 634.1,904.1 646.1,904.7 658.1,905.3 670.1,907.2 682.1,906.6 694.1,903.3 706.1,900.4 718.1,896.0 730.0,892.0 742.0,889.8 754.0,889.3 766.0,890.3 778.0,889.2 790.0,888.1 802.0,885.3 814.0,882.7 826.0,881.9 838.0,879.4 850.0,877.0 862.0,873.3 873.9,869.8 885.9,868.3 897.9,868.6 909.9,870.6 921.9,873.9 933.9,878.5 945.9,884.1 957.9,890.2 969.9,894.7 981.9,897.6 993.9,899.1 1005.9,899.5 1017.9,898.9 1029.8,902.4 1041.8,905.6 1053.8,907.4 1065.8,907.9 1077.8,907.4 1089.8,905.9 1101.8,903.5 1113.8,905.7 1125.8,907.7 1137.8,911.6 1149.8,915.2 1161.8,915.5 1173.7,915.9 1185.7,917.7 1197.7,920.8 1209.7,924.0 1221.7,925.7 1233.7,927.5 1245.7,925.6 1257.7,923.8 1269.7,923.6 1281.7,921.2 1293.7,918.9 1305.7,918.2 1317.7,915.4 1329.6,912.8 1341.6,908.5 1353.6,904.4 1365.6,902.4 1377.6,902.0 1389.6,903.3 1401.6,905.9 1413.6,909.7 1425.6,913.9 1437.6,916.5 1449.6,917.8 1461.6,917.8 1473.5,916.7 1485.5,919.7" fill="none" stroke="#e4e4e4" stroke-width="1.15" stroke-linejoin="round"/>
</svg>
<div class="ax axl" style="top:736px">80</div><div class="ax axr" style="top:736px">80</div>
<div class="ax axl" style="top:794px">60</div><div class="ax axr" style="top:794px">60</div>
<div class="ax axl" style="top:851px">40</div><div class="ax axr" style="top:851px">40</div>
<div class="ax axl" style="top:909px">20</div><div class="ax axr" style="top:909px">20</div>
<div class="ax axl" style="top:967px">0</div><div class="ax axr" style="top:967px">0</div>

<!-- splitter -->
<div class="abs" style="left:1536px;top:54px;width:16px;height:976px;background:#27282c"></div>
<div class="abs" style="left:1551px;top:54px;width:1px;height:976px;background:#34353a"></div>
<svg class="abs" style="left:1537px;top:533px" width="14" height="18" viewBox="0 0 14 18"><path d="M2.6 2 L10.8 9 L2.6 16" fill="none" stroke="#a2a3a6" stroke-width="2.7"/></svg>

<div class="abs" style="left:0;top:1002px;width:1536px;height:28px;background:#323338"></div>
<div class="t" style="left:9.3px;top:1007.3px;height:20px;line-height:20px;font-size:12px;color:#fff">副图</div>
<div class="tb" style="left:40px">遗漏K</div>
<div class="tb" style="left:100px">遗漏图</div>
<div class="tb" style="left:160px">单周期</div>
<div class="tb" style="left:220px">多周期</div>
<div class="tb" style="left:280px">出次</div>
<div class="tb" style="left:340px">MACD</div>
<div class="tb on" style="left:400px">ADX</div>
<div class="tb" style="left:460px">KDJ</div>
<div class="tb" style="left:520px">RSI</div>
<div class="t" style="left:662.0px;top:1007.3px;height:20px;line-height:20px;font-size:12px;color:#fff">主图</div>
<div class="tb on" style="left:692px">频率K</div>
<div class="tb" style="left:752px">遗漏K</div>
<div class="tb" style="left:812px">单周期</div>
<div class="tb" style="left:872px">多周期</div>
<div class="tb" style="left:932px">二阶</div>
<div class="tb on" style="left:992px">BOLL</div>
<div class="tb" style="left:1052px">EMA</div>
<div class="tb" style="left:1112px;background:#313237;box-shadow:inset 0 0 0 1px #2d2e32">MA</div>
<div class="tb" style="left:1471px;top:1005px;height:22.6px;line-height:24.4px">同屏</div>

<div id="panel">
  <!-- dark top area (coords relative to panel: x-1552, y-54) -->
  <div class="abs" style="left:0;top:0;width:368px;height:135px;background:#232428"></div>
  <!-- lottery select -->
  <div class="abs" style="left:5px;top:10px;width:90px;height:25px;border-radius:4px;background:#0a95ff"></div>
  <div class="t" style="left:17.0px;top:13.0px;height:20px;line-height:20px;font-size:14px;color:#fff;letter-spacing:0.33px">福彩3D</div>
  <svg class="abs" style="left:79px;top:19px" width="12" height="8" viewBox="0 0 12 8"><path d="M1 1 H11 L6 7 Z" fill="#fff" stroke="#fff" stroke-width="1" stroke-linejoin="round"/></svg>
  <div class="t" style="left:99.0px;top:13.0px;height:20px;line-height:20px;font-size:14px;color:#fff;letter-spacing:0.54px">第2025294期</div>
  <svg class="abs" style="left:191px;top:15px" width="15" height="15" viewBox="0 0 15 15"><path d="M12.1 7.7 A5.1 5.1 0 1 1 11.07 3.86" fill="none" stroke="#fff" stroke-width="2.2"/><path d="M13.2 2 V5.6 H8.9 Z" fill="#fff"/></svg>
  <div class="abs" style="left:299px;top:10px;width:60px;height:24px;border-radius:4px;background:#2e2f33;color:#fff;font-size:12px;line-height:26px;text-align:center">模拟模式</div>

  <!-- balls -->
  <div class="ball" style="left:10px;top:55px;font-size:17px;line-height:31.5px">5</div>
  <div class="ball" style="left:44px;top:55px;font-size:17px;line-height:31.5px">1</div>
  <div class="ball" style="left:78px;top:55px;font-size:17px;line-height:31.5px">3</div>
  <svg class="abs" style="left:110px;top:62px" width="12" height="16" viewBox="0 0 12 16"><path d="M3.2 2.7 L9.6 8.1 L3.2 13.5" fill="none" stroke="#cfcfd2" stroke-width="1.9"/></svg>
  <div class="dd" style="left:126px">类型</div>
  <svg class="abs" style="left:173px;top:67px" width="12" height="8" viewBox="0 0 12 8"><path d="M1 1 H11 L6 7 Z" fill="#8a8b8e"/></svg>
  <div class="dd" style="left:191px">条件</div>
  <svg class="abs" style="left:238px;top:67px" width="12" height="8" viewBox="0 0 12 8"><path d="M1 1 H11 L6 7 Z" fill="#8a8b8e"/></svg>

  <!-- tabs -->
  <div class="abs" style="left:186px;top:100px;width:58px;height:35px;border-radius:6px 6px 0 0;background:#323338"></div>
  <div class="ptab" style="left:0;width:58px">条件</div>
  <div class="ptab" style="left:58px;width:70px">走势图</div>
  <div class="ptab" style="left:128px;width:58px">指标</div>
  <div class="ptab" style="left:186px;width:58px;color:#0a95ff">工具</div>
  <div class="ptab" style="left:244px;width:58px">组号</div>
  <div class="ptab" style="left:302px;width:58px">社区</div>

  <div class="abs" style="left:0;top:135px;width:368px;height:8px;background:linear-gradient(#27282c,#2d2e33 40%,#323338)"></div>
  <!-- tool buttons -->
  <div class="btn" style="left:10px;top:151px">开奖数据</div>
  <div class="btn" style="left:128px;top:151px">快速缩水</div>
  <div class="btn" style="left:246px;top:151px">等分随机</div>
  <div class="btn" style="left:10px;top:191px">指定随机</div>
  <div class="btn" style="left:128px;top:191px">黄金分割</div>
  <div class="btn" style="left:246px;top:191px">随机胆配</div>
  <div class="btn" style="left:10px;top:231px;background:#2680ff">指定大底</div>
  <div class="btn" style="left:128px;top:231px">组六胆拖</div>
  <div class="btn" style="left:246px;top:231px;color:#0a95ff">单号码统计</div>
  <div class="btn" style="left:10px;top:271px">双色球容错</div>

  <div class="abs" style="left:0;top:317px;width:368px;height:5px;background:#27282c"></div>

  <!-- section title -->
  <div class="t" style="left:10.0px;top:340.5px;height:20px;line-height:20px;font-size:14px;color:#fff">指定大底</div>
  <svg class="abs" style="left:71px;top:342px" width="16" height="16" viewBox="0 0 16 16"><circle cx="8" cy="8" r="6.6" fill="none" stroke="#808185" stroke-width="1.1"/><text x="8" y="12.3" font-size="12" text-anchor="middle" fill="#808185" font-family="Liberation Sans,sans-serif" dy="0.5">?</text></svg>
  <div class="abs" style="left:279px;top:338px;width:40px;height:24px;border-radius:5px 0 0 5px;background:#0a95ff;color:#fff;font-size:14px;line-height:24px;text-align:center">直选</div>
  <div class="abs" style="left:319px;top:338px;width:40px;height:24px;border-radius:0 5px 5px 0;background:#1c1c20;color:#fff;font-size:14px;line-height:24px;text-align:center">组选</div>

  <div class="ball" style="left:135px;top:377px;font-size:14px;line-height:31.5px">百</div>
  <div class="ball" style="left:170px;top:377px;font-size:14px;line-height:31.5px">十</div>
  <div class="ball" style="left:205px;top:377px;font-size:14px;line-height:31.5px">个</div>

  <div class="abs" style="left:0;top:422px;width:368px;height:5px;background:#27282c"></div>

  <!-- numbers box -->
  <div class="abs" style="left:10px;top:447px;width:344px;height:150px;border-radius:5px;background:#1c1c20"></div>
  <div class="abs" style="left:26px;top:466.6px;width:322px;font-size:15px;line-height:19px;color:#fff;white-space:nowrap;letter-spacing:-0.115px">616 619 630 631 633 635 636 639 640 641 643<br>645 646 649 660 661 663 665 666 669 690 691<br>693 695 696 699 900 901 903 905 906 909 910<br>911 913 915 916 919 930 931 933 935 936 939<br>940 941 943 945 946 949 960 961 963 965 966<br>969 990 991 993 995 996 999</div>
  <div class="abs" style="left:343px;top:546px;width:3px;height:33px;border-radius:1.5px;background:#4a4b50"></div>

  <div class="abs" style="left:0;top:911px;width:368px;height:5px;background:#1d1d21"></div>
  <!-- chat -->
  <svg class="abs" style="left:300px;top:842px" width="64" height="56" viewBox="0 0 64 56">
    <defs>
      <radialGradient id="cg1" cx="0.32" cy="0.25" r="0.85"><stop offset="0" stop-color="#46aeff"/><stop offset="0.55" stop-color="#1a8cff"/><stop offset="1" stop-color="#0a72ee"/></radialGradient>
      <radialGradient id="cg2" cx="0.5" cy="0.5" r="0.7"><stop offset="0" stop-color="#6cd2ff"/><stop offset="1" stop-color="#1f9ffc"/></radialGradient>
    </defs>
    <path d="M27 6 a21 20 0 1 1 -12.5 36.1 l-4.9 2.1 l1.8 -5.3 A21 20 0 0 1 27 6z" fill="url(#cg1)"/>
    <rect x="20.9" y="18.1" width="3.9" height="7.7" rx="1.95" fill="#d6ecff"/><rect x="35.2" y="18.1" width="3.9" height="7.7" rx="1.95" fill="#d6ecff"/>
    <path d="M43.6 27 a13.8 12.4 0 1 0 9.4 21.5 l4 2.5 l-1.2 -4.4 A13.8 12.4 0 0 0 43.6 27z" fill="url(#cg2)"/>
    <rect x="36.1" y="35.3" width="2.7" height="4.6" rx="1.35" fill="#e6f7ff"/><rect x="44" y="35.3" width="2.7" height="4.6" rx="1.35" fill="#e6f7ff"/>
  </svg>
  <div class="abs" style="left:307px;top:896px;width:50px;height:20px;border-radius:10px;background:linear-gradient(90deg,#48a8ff,#0d7cf6);color:#fff;font-size:12px;line-height:22px;text-align:center">聊天室</div>

  <div class="bb" style="left:33px;background:#2680ff">粘贴号码</div>
  <div class="bb" style="left:139px">清空号码</div>
  <div class="bb" style="left:245px">查看趋势</div>
</div>

</body>
</html>
